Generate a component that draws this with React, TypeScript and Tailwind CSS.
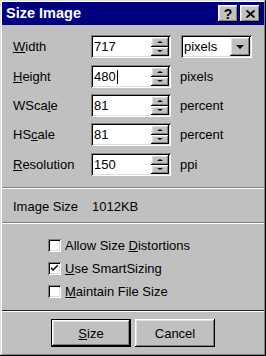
import React from "react";

const raised =
  "shadow-[inset_-1px_-1px_0_#000,inset_1px_1px_0_#fff,inset_-2px_-2px_0_#808080,inset_2px_2px_0_#dfdfdf]";
const sunken =
  "shadow-[inset_1px_1px_0_#808080,inset_-1px_-1px_0_#fff,inset_2px_2px_0_#000,inset_-2px_-2px_0_#dfdfdf]";

function Spinner() {
  return (
    <div className="flex flex-col w-[18px] h-full">
      <div className={`flex-1 bg-[#c0c0c0] flex items-center justify-center ${raised}`}>
        <div className="w-0 h-0 border-l-[3px] border-r-[3px] border-b-[2px] border-l-transparent border-r-transparent border-b-black" />
      </div>
      <div className={`flex-1 bg-[#c0c0c0] flex items-center justify-center ${raised}`}>
        <div className="w-0 h-0 border-l-[3px] border-r-[3px] border-t-[2px] border-l-transparent border-r-transparent border-t-black" />
      </div>
    </div>
  );
}

function NumField({ value, caret }: { value: string; caret?: boolean }) {
  return (
    <div className={`w-[80px] h-[23px] bg-white flex p-[2px] ${sunken}`}>
      <div className="flex-1 flex items-center pl-[1px]">
        <span>{value}</span>
        {caret && <span className="w-[1px] h-[14px] bg-black ml-[1px]" />}
      </div>
      <Spinner />
    </div>
  );
}

function Row({
  label,
  value,
  unit,
  caret,
  mt,
}: {
  label: React.ReactNode;
  value: string;
  unit?: string;
  caret?: boolean;
  mt: string;
}) {
  return (
    <div className={`flex items-center h-[23px] ${mt}`}>
      <div className="w-[89px] pl-[11px]">{label}</div>
      <NumField value={value} caret={caret} />
      {unit ? (
        <span className="ml-[9px]">{unit}</span>
      ) : (
        <div className={`ml-[10px] w-[71px] h-[23px] bg-white flex items-center p-[2px] ${sunken}`}>
          <span className="flex-1 pl-[1px]">pixels</span>
          <div className={`w-[20px] h-full bg-[#c0c0c0] flex items-center justify-center ${raised}`}>
            <div className="w-0 h-0 border-l-[4px] border-r-[4px] border-t-[4px] border-l-transparent border-r-transparent border-t-black" />
          </div>
        </div>
      )}
    </div>
  );
}

function Check({ checked, children }: { checked?: boolean; children: React.ReactNode }) {
  return (
    <div className="flex items-center h-[23px] pl-[46px]">
      <div className={`w-[13px] h-[13px] bg-white flex items-center justify-center ${sunken}`}>
        {checked && (
          <svg width="7" height="7" viewBox="0 0 7 7">
            <path d="M0 2 L0 4 L2 6 L7 1 L7 -1 L2 4 Z" fill="#000" />
          </svg>
        )}
      </div>
      <span className="ml-[4px]">{children}</span>
    </div>
  );
}

function Sep({ mt, dark }: { mt: string; dark?: boolean }) {
  return (
    <div className={`${mt} h-[2px] border-t ${dark ? "border-t-[#202020]" : "border-t-[#808080]"} border-b border-b-white`} />
  );
}

export default function App() {
  return (
    <div
      className={`w-[266px] h-[356px] bg-[#c0c0c0] p-[2px] text-[13px] leading-none text-black shadow-[inset_-1px_-1px_0_#000,inset_1px_1px_0_#dfdfdf,inset_-2px_-2px_0_#808080,inset_2px_2px_0_#fff]`}
      style={{ fontFamily: '"Liberation Sans", Arial, sans-serif' }}
    >
      <div className="h-[23px] bg-[#000080] flex items-center pl-[4px] pr-[4px]">
        <span className="flex-1 text-white font-bold text-[14.5px]">Size Image</span>
        <div className={`w-[20px] h-[17px] bg-[#c0c0c0] flex items-center justify-center font-bold text-[14px] ${raised}`}>
          ?
        </div>
        <div className={`ml-[2px] w-[20px] h-[17px] bg-[#c0c0c0] flex items-center justify-center ${raised}`}>
          <svg width="9" height="8" viewBox="0 0 9 8">
            <path d="M0.5 0.5 L8.5 7.5 M8.5 0.5 L0.5 7.5" stroke="#000" strokeWidth="1.8" />
          </svg>
        </div>
      </div>

      <Row
        mt="mt-[10px]"
        label={<><u>W</u>idth</>}
        value="717"
      />
      <Row mt="mt-[7px]" label={<><u>H</u>eight</>} value="480" unit="pixels" caret />
      <Row mt="mt-[6px]" label={<>WSca<u>l</u>e</>} value="81" unit="percent" />
      <Row mt="mt-[6px]" label={<>HS<u>c</u>ale</>} value="81" unit="percent" />
      <Row mt="mt-[7px]" label={<><u>R</u>esolution</>} value="150" unit="ppi" />

      <Sep mt="mt-[11px]" />

      <div className="mt-[9px] h-[16px] flex items-center">
        <span className="w-[90px] pl-[11px]">Image Size</span>
        <span>1012KB</span>
      </div>

      <Sep mt="mt-[8px]" />

      <div className="mt-[10px]">
        <Check>
          Allow Size <u>D</u>istortions
        </Check>
        <Check checked>
          <u>U</u>se SmartSizing
        </Check>
        <Check>
          <u>M</u>aintain File Size
        </Check>
      </div>

      <Sep mt="mt-[7px]" dark />

      <div className="mt-[7px] flex justify-center gap-[4px]">
        <div className="w-[80px] h-[28px] border border-black">
          <div className={`w-full h-full flex items-center justify-center ${raised}`}>
            <span>
              <u>S</u>ize
            </span>
          </div>
        </div>
        <div className={`w-[80px] h-[28px] flex items-center justify-center ${raised}`}>
          Cancel
        </div>
      </div>
    </div>
  );
}
